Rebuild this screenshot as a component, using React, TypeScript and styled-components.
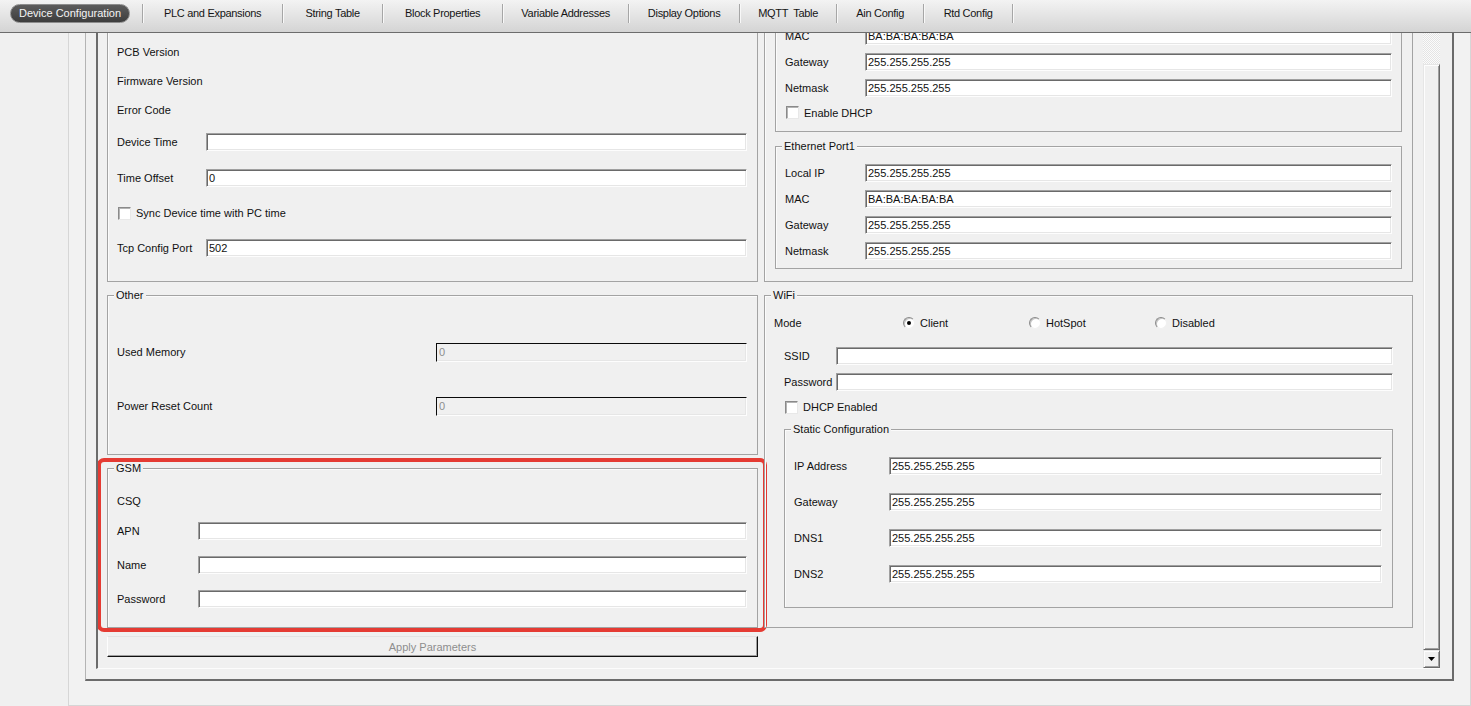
import React, { useLayoutEffect, useRef } from 'react';
import styled, { createGlobalStyle } from 'styled-components';

const TABS = [
  { title: 'PLC and Expansions', width: 139 },
  { title: 'String Table', width: 99 },
  { title: 'Block Properties', width: 119 },
  { title: 'Variable Addresses', width: 125 },
  { title: 'Display Options', width: 110 },
  { title: 'MQTT  Table', width: 96 },
  { title: 'Ain Config', width: 86 },
  { title: 'Rtd Config', width: 88 },
];

const IP = '255.255.255.255';
const MAC = 'BA:BA:BA:BA:BA';
const SCROLL_OFFSET = 83;

interface FieldProps {
  label: string;
  value?: string;
  labelWidth: number;
  height: number;
  disabled?: boolean;
}

const Field = ({ label, value = '', labelWidth, height, disabled }: FieldProps): JSX.Element => (
  <FieldRow $labelWidth={labelWidth} $height={height}>
    <span>{label}</span>
    <TextBox readOnly value={value} $disabled={disabled} />
  </FieldRow>
);

interface CheckProps {
  text: string;
  height: number;
}

const Check = ({ text, height }: CheckProps): JSX.Element => (
  <CheckRow $height={height}>
    <CheckBox />
    {text}
  </CheckRow>
);

interface PortProps {
  title: string;
  withDhcp?: boolean;
  mt?: number;
}

const EthernetPort = ({ title, withDhcp, mt = 0 }: PortProps): JSX.Element => (
  <Group $mt={mt} $pad={withDhcp ? '13px 9px 7px 9px' : '13px 9px 4px 9px'}>
    <Legend>{title}</Legend>
    {['Local IP', 'MAC', 'Gateway', 'Netmask'].map((l) => (
      <Field key={l} label={l} value={l === 'MAC' ? MAC : IP} labelWidth={80} height={26} />
    ))}
    {withDhcp && <Check text="Enable DHCP" height={23} />}
  </Group>
);

const App = (): JSX.Element => {
  const viewRef = useRef<HTMLDivElement>(null);

  useLayoutEffect(() => {
    if (viewRef.current) viewRef.current.scrollTop = SCROLL_OFFSET;
  }, []);

  return (
    <Page>
      <GlobalStyle />
      <TabBar>
        <ActiveTab>Device Configuration</ActiveTab>
        <Separator />
        {TABS.map((t) => (
          <React.Fragment key={t.title}>
            <Tab $width={t.width}>{t.title}</Tab>
            <Separator />
          </React.Fragment>
        ))}
      </TabBar>

      <Body>
        <OuterPanel>
          <Frame>
            <ScrollPanel>
              <Viewport ref={viewRef}>
                <Content>
                  <Column>
                    <Group $pad="18px 10px 15px 9px">
                      <Legend>Device</Legend>
                      <LabelRow $height={29}>Device Model</LabelRow>
                      <LabelRow $height={29}>Serial Number</LabelRow>
                      <LabelRow $height={29}>PCB Version</LabelRow>
                      <LabelRow $height={29}>Firmware Version</LabelRow>
                      <LabelRow $height={29}>Error Code</LabelRow>
                      <Field label="Device Time" labelWidth={89} height={36} />
                      <Field label="Time Offset" value="0" labelWidth={89} height={36} />
                      <Check text="Sync Device time with PC time" height={34} />
                      <Field label="Tcp Config Port" value="502" labelWidth={89} height={36} />
                    </Group>

                    <Group $mt={13} $pad="29px 10px 21px 9px">
                      <Legend>Other</Legend>
                      <Field label="Used Memory" value="0" labelWidth={319} height={54} disabled />
                      <Field label="Power Reset Count" value="0" labelWidth={319} height={54} disabled />
                    </Group>

                    <Highlighted>
                      <Group $pad="18px 10px 11px 9px">
                        <Legend>GSM</Legend>
                        <LabelRow $height={27}>CSQ</LabelRow>
                        <Field label="APN" labelWidth={81} height={34} />
                        <Field label="Name" labelWidth={81} height={34} />
                        <Field label="Password" labelWidth={81} height={34} />
                      </Group>
                      <RedMark />
                    </Highlighted>

                    <ApplyButton disabled>Apply Parameters</ApplyButton>
                  </Column>

                  <Column>
                    <Group $pad="22px 10px 12px 10px">
                      <Legend>Ethernet</Legend>
                      <EthernetPort title="Ethernet Port0" withDhcp />
                      <EthernetPort title="Ethernet Port1" mt={14} />
                    </Group>

                    <Group $mt={13} $pad="14px 19px 19px 9px">
                      <Legend>WiFi</Legend>
                      <ModeRow>
                        <span>Mode</span>
                        <RadioItem>
                          <Radio $checked />
                          Client
                        </RadioItem>
                        <RadioItem>
                          <Radio />
                          HotSpot
                        </RadioItem>
                        <RadioItem>
                          <Radio />
                          Disabled
                        </RadioItem>
                      </ModeRow>
                      <WifiBody>
                        <Field label="SSID" labelWidth={52} height={26} />
                        <Field label="Password" labelWidth={52} height={26} />
                        <Check text="DHCP Enabled" height={24} />
                        <Group $mt={10} $pad="18px 10px 15px 9px">
                          <Legend>Static Configuration</Legend>
                          {['IP Address', 'Gateway', 'DNS1', 'DNS2'].map((l) => (
                            <Field key={l} label={l} value={IP} labelWidth={95} height={36} />
                          ))}
                        </Group>
                      </WifiBody>
                    </Group>
                  </Column>
                </Content>
              </Viewport>

              <ScrollBar>
                <Track />
                <Thumb />
                <ArrowButton>
                  <svg width="7" height="4" viewBox="0 0 7 4">
                    <polygon points="0,0 7,0 3.5,4" fill="#000" />
                  </svg>
                </ArrowButton>
              </ScrollBar>
            </ScrollPanel>
          </Frame>
        </OuterPanel>
      </Body>
    </Page>
  );
};

export default App;

const GlobalStyle = createGlobalStyle`
  html, body {
    margin: 0;
    padding: 0;
    background: #f0f0f0;
  }
  body {
    font-family: 'Liberation Sans', Arial, sans-serif;
    font-size: 11px;
    color: #111;
  }
`;

const Page = styled.div`
  width: 1471px;
  height: 706px;
  display: flex;
  flex-direction: column;
  overflow: hidden;
  background: #f0f0f0;
`;

const TabBar = styled.div`
  height: 33px;
  box-sizing: border-box;
  display: flex;
  align-items: center;
  padding: 0 0 6px 10px;
  border-bottom: 1px solid #6c6c6c;
  background: linear-gradient(#f3f3f3, #d4d4d4);
  flex-shrink: 0;
`;

const ActiveTab = styled.div`
  height: 19px;
  box-sizing: border-box;
  display: flex;
  align-items: center;
  padding: 0 8px;
  margin-right: 12px;
  border: 1px solid #8c8c8c;
  border-radius: 10px;
  background: linear-gradient(#5c5c5c, #3d3d3d);
  color: #f4f4f4;
  white-space: nowrap;
`;

const Tab = styled.div<{ $width: number }>`
  width: ${(p) => p.$width}px;
  text-align: center;
  white-space: pre;
  letter-spacing: -0.3px;
  color: #151515;
`;

const Separator = styled.div`
  width: 1px;
  height: 19px;
  background: #a6a6a6;
  box-shadow: 1px 0 0 #f8f8f8;
`;

const Body = styled.div`
  flex: 1;
  display: flex;
  min-height: 0;
`;

const OuterPanel = styled.div`
  flex: 1;
  margin-left: 68px;
  padding: 0 16px 24px 16px;
  display: flex;
  border: 1px solid #d6d6d6;
  border-top: none;
  background: #f2f2f2;
`;

const Frame = styled.div`
  flex: 1;
  display: flex;
  padding: 0 12px 10px 10px;
  border-left: 1px solid #b4b4b4;
  border-right: 2px solid #6b6b6b;
  border-bottom: 2px solid #6b6b6b;
  background: #f0f0f0;
`;

const ScrollPanel = styled.div`
  flex: 1;
  display: flex;
  min-width: 0;
  border-left: 2px solid #6b6b6b;
  border-bottom: 1px solid #fcfcfc;
`;

const Viewport = styled.div`
  flex: 1;
  overflow: hidden;
  min-width: 0;
`;

const Content = styled.div`
  display: grid;
  grid-template-columns: 651px 649px;
  column-gap: 6px;
  align-items: start;
  padding: 10px 10px 24px 9px;
`;

const Column = styled.div`
  display: flex;
  flex-direction: column;
`;

const Group = styled.div<{ $mt?: number; $pad: string }>`
  position: relative;
  margin-top: ${(p) => p.$mt ?? 0}px;
  padding: ${(p) => p.$pad};
  border: 1px solid #a3a3a3;
  box-shadow: inset 1px 1px 0 #fbfbfb;
  display: flex;
  flex-direction: column;
`;

const Legend = styled.div`
  position: absolute;
  top: -7px;
  left: 6px;
  padding: 0 2px;
  line-height: 13px;
  background: #f0f0f0;
  white-space: nowrap;
`;

const LabelRow = styled.div<{ $height: number }>`
  height: ${(p) => p.$height}px;
  display: flex;
  align-items: center;
`;

const FieldRow = styled.div<{ $labelWidth: number; $height: number }>`
  height: ${(p) => p.$height}px;
  display: grid;
  grid-template-columns: ${(p) => p.$labelWidth}px 1fr;
  align-items: center;
  white-space: nowrap;
`;

const TextBox = styled.input<{ $disabled?: boolean }>`
  box-sizing: border-box;
  width: 100%;
  height: ${(p) => (p.$disabled ? 19 : 18)}px;
  margin: 0;
  padding: 0 0 0 2px;
  font: inherit;
  color: ${(p) => (p.$disabled ? '#8e8e8e' : '#111')};
  background: ${(p) => (p.$disabled ? '#f0f0f0' : '#fff')};
  border: 1px solid;
  border-color: ${(p) => (p.$disabled ? '#0a0a0a #fdfdfd #fdfdfd #0a0a0a' : '#a0a0a0 #fdfdfd #fdfdfd #a0a0a0')};
  box-shadow: ${(p) =>
    p.$disabled ? 'inset -1px -1px 0 #e6e6e6' : 'inset 1px 1px 0 #6a6a6a, inset -1px -1px 0 #e6e6e6'};
  outline: none;
`;

const CheckRow = styled.div<{ $height: number }>`
  height: ${(p) => p.$height}px;
  display: flex;
  align-items: center;
  gap: 5px;
  padding-left: 1px;
`;

const CheckBox = styled.span`
  width: 13px;
  height: 13px;
  box-sizing: border-box;
  background: #fff;
  border: 1px solid;
  border-color: #8a8a8a #e8e8e8 #e8e8e8 #8a8a8a;
  box-shadow: inset 1px 1px 0 #b4b4b4;
`;

const ModeRow = styled.div`
  height: 26px;
  display: grid;
  grid-template-columns: 129px repeat(3, 126px);
  align-items: center;
`;

const RadioItem = styled.div`
  display: flex;
  align-items: center;
  gap: 5px;
`;

const Radio = styled.span<{ $checked?: boolean }>`
  position: relative;
  width: 12px;
  height: 12px;
  box-sizing: border-box;
  border-radius: 50%;
  background: #fff;
  border: 1px solid;
  border-color: #8a8a8a #f0f0f0 #f0f0f0 #8a8a8a;
  box-shadow: inset 1px 1px 0 #c4c4c4;

  &::after {
    content: '';
    display: ${(p) => (p.$checked ? 'block' : 'none')};
    position: absolute;
    top: 3px;
    left: 3px;
    width: 4px;
    height: 4px;
    border-radius: 50%;
    background: #000;
  }
`;

const WifiBody = styled.div`
  margin-top: 7px;
  padding-left: 10px;
  display: flex;
  flex-direction: column;
`;

const Highlighted = styled.div`
  position: relative;
  margin-top: 13px;
`;

const RedMark = styled.div`
  position: absolute;
  top: -10px;
  left: -10px;
  right: -9px;
  bottom: -4px;
  border: 4px solid #e53b33;
  border-radius: 7px;
  pointer-events: none;
`;

const ApplyButton = styled.button`
  margin-top: 8px;
  height: 21px;
  width: 100%;
  padding: 0;
  font: inherit;
  color: #8e8e8e;
  background: #f0f0f0;
  border: 1px solid;
  border-color: #e3e3e3 #101010 #101010 #fdfdfd;
  box-shadow: inset -1px -1px 0 #a0a0a0;
`;

const ScrollBar = styled.div`
  width: 17px;
  display: flex;
  flex-direction: column;
`;

const Track = styled.div`
  height: 31px;
  background: repeating-conic-gradient(#fbfbfb 0 25%, #e4e4e4 0 50%) 0 0 / 2px 2px;
`;

const Thumb = styled.div`
  flex: 1;
  background: #f0f0f0;
  border: 1px solid;
  border-color: #e6e6e6 #6a6a6a #6a6a6a #e6e6e6;
  box-shadow: inset 1px 1px 0 #fdfdfd, inset -1px -1px 0 #a0a0a0;
`;

const ArrowButton = styled.div`
  height: 18px;
  box-sizing: border-box;
  display: flex;
  align-items: center;
  justify-content: center;
  background: #f0f0f0;
  border: 1px solid;
  border-color: #e6e6e6 #6a6a6a #6a6a6a #e6e6e6;
  box-shadow: inset 1px 1px 0 #fdfdfd, inset -1px -1px 0 #a0a0a0;
`;
